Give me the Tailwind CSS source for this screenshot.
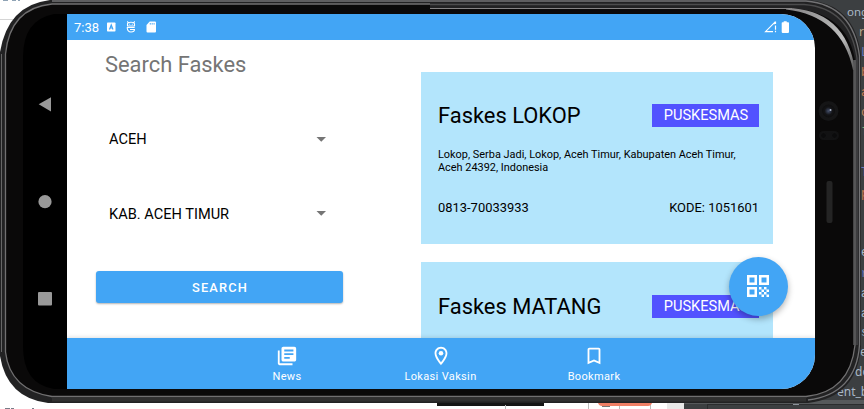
<!DOCTYPE html>
<html lang="id">
<head>
<meta charset="utf-8">
<title>Search Faskes</title>
<script src="https://cdn.jsdelivr.net/npm/@tailwindcss/browser@4"></script>
</head>
<body class="overflow-hidden bg-white">
<div class="relative h-[409px] w-[864px] overflow-hidden font-['Roboto',sans-serif]">

  <!-- Desktop behind the device, and the device frame -->
  <svg class="absolute inset-0" width="864" height="409" viewBox="0 0 864 409">
    <defs>
      <linearGradient id="shine" x1="0" x2="1" y1="0" y2="1">
        <stop offset="0" stop-color="#858384"/><stop offset=".35" stop-color="#a5a5a5"/><stop offset=".65" stop-color="#bdbdbd"/><stop offset="1" stop-color="#555"/>
      </linearGradient>
      <radialGradient id="lens"><stop offset="0" stop-color="#46506a"/><stop offset=".3" stop-color="#2a3040"/><stop offset=".6" stop-color="#141416"/><stop offset="1" stop-color="#0d0d0e"/></radialGradient>
    </defs>
    <rect width="864" height="409" fill="#fff"/>
    <path d="M0 19.500H30" stroke="#d5d5d5"/>
    <path d="M3 .5h5M12 .5h4M18 .5h2" stroke="#8fa3b5"/>
    <rect x="684" width="180" height="409" fill="#3c3f41"/>
    <path d="M684 400h180v4H684z" fill="#56595b"/>
    <path d="M708 404.500h156" stroke="#2b2d2e"/><path d="M707.500 404v5" stroke="#2b2d2e"/>
    <path d="M793 404.500h6" stroke="#8b9199"/>
    <rect x="437" y="402" width="107" height="4" fill="#151515"/>
    <path d="M505.500 405v4M588.500 402v7M619.500 405v4M650.500 405v4" stroke="#bbb"/>
    <path d="M598 402h54v1q-1 3-4 3h-46q-3 0-4-3z" fill="#ef7f65"/>
    <path d="M602 406.500h8" stroke="#777"/>
    <rect x="667" y="403" width="17" height="6" fill="#e8e8e8"/>
    <path d="M5 408.500h5M11 408.500h3M32 408.500h2" stroke="#777d88"/>

    <g font-family="Liberation Mono, monospace" font-size="12" fill="#a9b7c6">
      <text x="847" y="16" font-family="Noto Sans, sans-serif" font-size="11.500">ong</text>
      <text x="859" y="36" font-family="Noto Sans, sans-serif" fill="#b9a88c">r</text>
      <text x="861" y="56" fill="#6a78b8">L</text>
      <text x="861" y="76" fill="#c47a50">b</text>
      <text x="861" y="96" fill="#c47a50">a</text>
      <text x="861" y="116" fill="#c4855c">c</text>
      <text x="861" y="136" fill="#7fae78">l</text>
      <text x="861" y="176" fill="#6a78b8">T</text>
      <text x="861" y="197" fill="#c47a50">p</text>
      <text x="861" y="256">e</text>
      <text x="861" y="277" fill="#6a78b8">r</text>
      <text x="861" y="297">a</text>
      <text x="861" y="317">a</text>
      <text x="861" y="336">s</text>
      <text x="860" y="356">e</text>
      <text x="855" y="376" font-family="Noto Sans, sans-serif">do</text>
      <text x="837" y="396" font-family="Noto Sans, sans-serif">ent_b</text>
    </g>

    <path d="M50 0H806Q855 3 861 56V345Q858 397 808 403H48Q7 398 0 356V52Q8 5 50 0Z" fill="#222223"/>
    <path d="M52 1H806Q853 5 859.500 56V345Q856 394 808 400" fill="none" stroke="#737375" stroke-width="1.300"/>
    <path d="M430 4.500H804Q850 8 857 58V345" fill="none" stroke="#4c4c4d" stroke-width="1.300"/>
    <path d="M430 4H52Q10 8 5.500 54V352Q10 390 52 396.500H806Q850 392 855 345V60Q847 13 794 8.500H430Z" fill="#0a0909"/>
    <path d="M430 4H52Q10 8 5.500 54V352Q10 390 52 396.500H806Q850 392 855 345V60" fill="none" stroke="#717071" stroke-width="1.300"/>
    <path d="M430 8.500H792" stroke="#858384"/>
    <path d="M786 8Q846 9 855 70H853Q842 16 786 9.500Z" fill="url(#shine)"/>
    <path d="M1.500 352V54" stroke="#666"/>
    <path d="M854 60V345" stroke="#5a5a5b" stroke-width="1.500"/>
    <path d="M52 399.500H806" stroke="#303030" stroke-width="4"/>
    <path d="M68 14H54Q23 20 23 57V346Q23 384 54 389H68Z" fill="#000"/>
    <circle cx="828.500" cy="111" r="10" fill="#151516"/>
    <circle cx="828.500" cy="111" r="6.500" fill="url(#lens)"/>
    <circle cx="830.500" cy="110" r="1" fill="#aeb6c8"/>
    <rect x="819" y="131" width="20" height="9" rx="4.500" fill="#121213"/>
    <circle cx="823.500" cy="135.500" r="3" fill="#0b0b0c" stroke="#151516"/><circle cx="834.500" cy="135.500" r="3" fill="#0b0b0c" stroke="#151516"/>
    <rect x="826.500" y="181" width="6" height="42" rx="2" fill="#242424"/>
  </svg>

  <!-- Device screen -->
  <div class="absolute left-[23px] top-[14px] flex h-[375px] w-[792px] overflow-hidden rounded-r-[34px]">
    <nav class="flex w-[44px] shrink-0 flex-col items-center pt-[83px]">
      <svg width="14" height="15" viewBox="0 0 14 15"><path d="M13 .3v14.200L.7 7.300z" fill="#999"/></svg>
      <svg class="mt-[83px]" width="14" height="14" viewBox="0 0 14 14"><circle cx="7" cy="6.700" r="6.600" fill="#999"/></svg>
      <svg class="mt-[83px]" width="14" height="14" viewBox="0 0 14 14"><rect width="14" height="13.500" rx="1" fill="#999"/></svg>
    </nav>

    <div class="relative flex flex-1 flex-col bg-white">
      <header class="flex h-[26px] shrink-0 items-center bg-[#42a5f5] pl-[7px] pr-[25px] text-[13px] text-white">
        <span class="pt-px leading-none">7:38</span>
        <svg class="ml-[8px]" width="9" height="10" viewBox="0 0 9 10"><rect y=".5" width="8.500" height="9" rx=".7" fill="#fff"/><path d="M2.500 7.500 4.250 3 6 7.500M3 6h2.500" fill="none" stroke="#42a5f5" stroke-width="1.200"/></svg>
        <svg class="ml-[10px]" width="10" height="12" viewBox="0 0 10 12"><g fill="none" stroke="#fff" stroke-width="1.100"><path d="M1.500 5V3Q1.500 1.300 5 1.300T8.500 3V5ZM.8 6.500H8.700M1.200 6.800Q1.500 11 5 11T8.500 8.500H4M1.300 .4 2.300 1.800M8.700 .4 7.700 1.800"/></g><path d="M3.200 3.200h1M5.800 3.200h1" stroke="#fff"/></svg>
        <svg class="ml-[10px]" width="11" height="12" viewBox="0 0 11 12"><path d="M3.700.5H9q1 0 1 1v9q0 1-1 1H1.500q-1 0-1-1V4z" fill="#fff"/><path d="M4.300 2v1.600M6.200 2v1.600M8.100 2v1.600" stroke="#42a5f5" stroke-width=".9"/></svg>
        <svg class="ml-auto" width="13" height="12" viewBox="0 0 13 12"><path d="M9 10.600H1.500L10.500 1.500V3.300" fill="none" stroke="#fff" stroke-width="1.100"/><path d="M11.500 .5v2.500M11.500 4.500V8.700M11.500 9.800v1.500" stroke="#fff" stroke-width="1.200"/></svg>
        <svg class="ml-[4px]" width="9" height="12" viewBox="0 0 9 12"><path d="M2.700 1.300V.2h3v1.100H7.200q.8 0 .8.800v9q0 .8-.8.800H1.500q-.8 0-.8-.8v-9q0-.8.800-.8z" fill="#fff"/></svg>
      </header>

      <main class="flex min-h-0 flex-1 overflow-hidden">
        <section class="flex w-[276px] shrink-0 flex-col pl-[29px]">
          <h1 class="ml-[9px] mt-[11px] text-[21.900px] leading-[28px] text-[#757575]">Search Faskes</h1>
          <div class="ml-[13px] mr-[17px] mt-[50px] flex h-[20px] items-center justify-between text-[14.600px] text-black">
            <span class="pt-[2px]">ACEH</span>
            <svg width="10" height="5" viewBox="0 0 10 5"><path d="M.5 0H10L5.250 4.750z" fill="#757575"/></svg>
          </div>
          <div class="ml-[13px] mr-[17px] mt-[54px] flex h-[20px] items-center justify-between text-[14.600px] text-black">
            <span class="pt-[3px]">KAB. ACEH TIMUR</span>
            <svg width="10" height="5" viewBox="0 0 10 5"><path d="M.5 0H10L5.250 4.750z" fill="#757575"/></svg>
          </div>
          <button class="mt-[48px] h-[32px] rounded-[3px] bg-[#42a5f5] pl-px pt-px text-[12.800px] font-medium tracking-[1.150px] text-white shadow-[0_1px_2px_rgba(0,0,0,0.3)]">SEARCH</button>
        </section>

        <section class="ml-[78px] flex w-[352px] flex-col gap-[18.400px] pt-[31.700px] text-black">
          <article class="flex h-[172px] shrink-0 flex-col bg-[#b3e5fc] pl-[17px] pr-[14px] pt-[32px]">
            <div class="flex items-center justify-between">
              <h2 class="text-[21.900px] leading-[23px]">Faskes LOKOP</h2>
              <span class="h-[23px] w-[107px] bg-[#5252ff] pl-px text-center text-[14.600px] leading-[23px] text-white">PUSKESMAS</span>
            </div>
            <p class="mt-[21px] text-[10.920px] leading-[13px]">Lokop, Serba Jadi, Lokop, Aceh Timur, Kabupaten Aceh Timur,<br>Aceh 24392, Indonesia</p>
            <div class="mt-[26px] flex justify-between text-[12.930px] leading-[16px]"><span>0813-70033933</span><span>KODE: 1051601</span></div>
          </article>
          <article class="flex h-[172px] shrink-0 flex-col bg-[#b3e5fc] pl-[17px] pr-[14px] pt-[32.700px]">
            <div class="flex items-center justify-between">
              <h2 class="text-[21.900px] leading-[23px]">Faskes MATANG</h2>
              <span class="h-[23px] w-[107px] bg-[#5252ff] pl-px text-center text-[14.600px] leading-[23px] text-white">PUSKESMAS</span>
            </div>
          </article>
        </section>
      </main>

      <footer class="flex h-[51px] shrink-0 justify-center bg-[#42a5f5] pr-px text-[11px] tracking-[0.350px] text-white shadow-[0_-1px_4px_rgba(0,0,0,0.12)]">
        <div class="flex w-[153px] flex-col items-center pt-[7px]">
          <svg width="22" height="22" viewBox="0 0 24 24" fill="#fff"><path d="M4 6H2v14c0 1.100.9 2 2 2h14v-2H4V6zm16-4H8c-1.100 0-2 .9-2 2v12c0 1.100.9 2 2 2h12c1.100 0 2-.9 2-2V4c0-1.100-.9-2-2-2zm-1 9H9V9h10v2zm-4 4H9v-2h6v2zm4-8H9V5h10v2z"/></svg>
          <span class="mt-[3px] leading-[14px]">News</span>
        </div>
        <div class="flex w-[154px] flex-col items-center pt-[7px]">
          <svg width="22" height="22" viewBox="0 0 24 24" fill="#fff"><path d="M12 2C8.130 2 5 5.130 5 9c0 5.250 7 13 7 13s7-7.750 7-13c0-3.870-3.130-7-7-7zM7 9c0-2.760 2.240-5 5-5s5 2.240 5 5c0 2.880-2.880 7.190-5 9.880C9.920 16.210 7 11.850 7 9z"/><circle cx="12" cy="9" r="2.500"/></svg>
          <span class="mt-[3px] leading-[14px]">Lokasi Vaksin</span>
        </div>
        <div class="flex w-[153px] flex-col items-center pt-[7px]">
          <svg width="22" height="22" viewBox="0 0 24 24" fill="#fff"><path d="M17 3H7c-1.100 0-1.990.9-1.990 2L5 21l7-3 7 3V5c0-1.100-.9-2-2-2zm0 15-5-2.180L7 18V5h10v13z"/></svg>
          <span class="mt-[3px] leading-[14px]">Bookmark</span>
        </div>
      </footer>

      <button class="absolute left-[662px] top-[242.500px] flex size-[59px] items-center justify-center rounded-full bg-[#42a5f5] pr-px shadow-[0_3px_6px_rgba(0,0,0,0.3)]">
        <svg width="22" height="22" viewBox="0 0 22 22" fill="#fff"><path fill-rule="evenodd" d="M0 0h10v10H0zM2.500 2.500v5h5v-5zM12 0h10v10H12zM14.500 2.500v5h5v-5zM0 12h10v10H0zM2.500 14.500v5h5v-5z"/><path d="M12 12h2.500v2.500H12zM17 12h2.500v2.500H17zM14.500 14.500H17V17h-2.500zM19.500 14.500H22V17h-2.500zM12 17h2.500v2.500H12zM17 17h2.500v2.500H17zM14.500 19.500H17V22h-2.500zM19.500 19.500H22V22h-2.500z"/></svg>
      </button>
    </div>
  </div>
</div>
</body>
</html>
